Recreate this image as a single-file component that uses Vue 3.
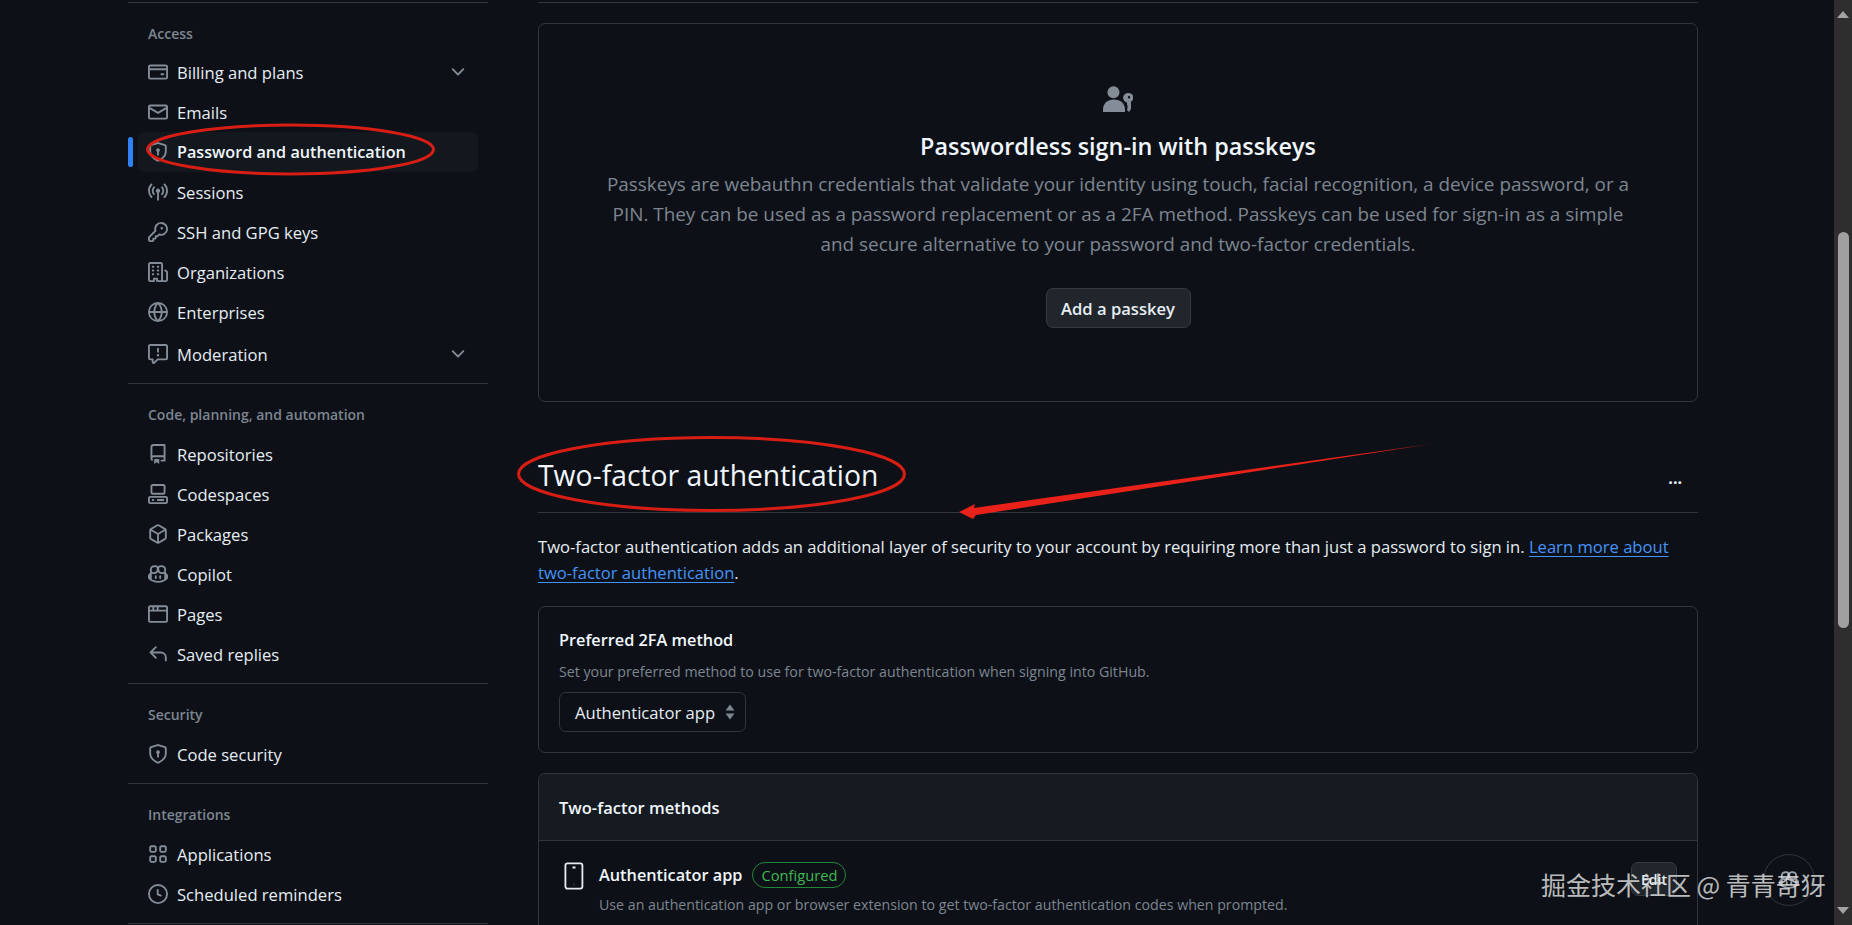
<script setup>
const P = {
  card: 'M10.75 9a.75.75 0 0 0 0 1.5h1.5a.75.75 0 0 0 0-1.5h-1.5ZM0 3.75C0 2.784.784 2 1.75 2h12.5c.966 0 1.75.784 1.75 1.75v8.5A1.75 1.75 0 0 1 14.25 14H1.75A1.75 1.75 0 0 1 0 12.25ZM14.5 6.5h-13v5.75c0 .138.112.25.25.25h12.5a.25.25 0 0 0 .25-.25Zm0-2.75a.25.25 0 0 0-.25-.25H1.75a.25.25 0 0 0-.25.25V5h13Z',
  mail: 'M1.75 2h12.5c.966 0 1.75.784 1.75 1.75v8.5A1.75 1.75 0 0 1 14.25 14H1.75A1.75 1.75 0 0 1 0 12.25v-8.5C0 2.784.784 2 1.75 2ZM1.5 12.251c0 .138.112.25.25.25h12.5a.25.25 0 0 0 .25-.25V5.809L8.38 9.397a.75.75 0 0 1-.76 0L1.5 5.809v6.442Zm13-8.181v-.32a.25.25 0 0 0-.25-.25H1.75a.25.25 0 0 0-.25.25v.32L8 7.88Z',
  shield: 'm8.533.133 5.25 1.68A1.75 1.75 0 0 1 15 3.48V7c0 1.566-.32 3.182-1.303 4.682-.983 1.498-2.585 2.813-5.032 3.855a1.697 1.697 0 0 1-1.33 0c-2.447-1.042-4.049-2.357-5.032-3.855C1.32 10.182 1 8.566 1 7V3.48a1.75 1.75 0 0 1 1.217-1.667l5.25-1.68a1.748 1.748 0 0 1 1.066 0Zm-.61 1.429.001.001-5.25 1.68a.251.251 0 0 0-.174.237V7c0 1.36.275 2.666 1.057 3.859.784 1.194 2.121 2.342 4.366 3.298a.196.196 0 0 0 .154 0c2.245-.957 3.582-2.103 4.366-3.297C13.225 9.666 13.5 8.358 13.5 7V3.48a.25.25 0 0 0-.174-.238l-5.25-1.68a.25.25 0 0 0-.153 0ZM9.5 6.5c0 .536-.286 1.032-.75 1.3v2.45a.75.75 0 0 1-1.5 0V7.8A1.5 1.5 0 1 1 9.5 6.5Z',
  broadcast: 'M8.75 8.582v5.668a.75.75 0 0 1-1.5 0V8.582a1.75 1.75 0 1 1 1.5 0Zm3.983-7.125a.75.75 0 0 1 1.06.026A7.976 7.976 0 0 1 16 7c0 2.139-.84 4.083-2.207 5.517a.75.75 0 1 1-1.086-1.034A6.474 6.474 0 0 0 14.5 7a6.474 6.474 0 0 0-1.793-4.483.75.75 0 0 1 .026-1.06Zm-9.466 0c.3.286.312.76.026 1.06A6.474 6.474 0 0 0 1.5 7a6.47 6.47 0 0 0 1.793 4.483.75.75 0 0 1-1.086 1.034A7.973 7.973 0 0 1 0 7c0-2.139.84-4.083 2.207-5.517a.75.75 0 0 1 1.06-.026Zm8.556 2.321A4.988 4.988 0 0 1 13 7a4.988 4.988 0 0 1-1.177 3.222.75.75 0 1 1-1.146-.967A3.487 3.487 0 0 0 11.5 7c0-.86-.309-1.645-.823-2.255a.75.75 0 0 1 1.146-.967Zm-6.492.958A3.48 3.48 0 0 0 4.5 7a3.48 3.48 0 0 0 .823 2.255.75.75 0 0 1-1.146.967A4.981 4.981 0 0 1 3 7a4.98 4.98 0 0 1 1.188-3.236.75.75 0 1 1 1.143.97Z',
  key: 'M10.5 0a5.499 5.499 0 1 1-1.288 10.848l-.932.932a.749.749 0 0 1-.53.22H7v.75a.749.749 0 0 1-.22.53l-.5.5a.749.749 0 0 1-.53.22H5v.75a.749.749 0 0 1-.22.53l-.5.5a.749.749 0 0 1-.53.22h-2A1.75 1.75 0 0 1 0 14.25v-2c0-.199.079-.389.22-.53l4.932-4.932A5.5 5.5 0 0 1 10.5 0Zm-4 5.5c-.001.431.069.86.205 1.269a.75.75 0 0 1-.181.768L1.5 12.56v1.69c0 .138.112.25.25.25h1.69l.06-.06v-1.19a.75.75 0 0 1 .75-.75h1.19l.06-.06v-1.19a.75.75 0 0 1 .75-.75h1.19l1.023-1.025a.75.75 0 0 1 .768-.18A4 4 0 1 0 6.5 5.5ZM11 6a1 1 0 1 1 0-2 1 1 0 0 1 0 2Z',
  org: 'M1.75 16A1.75 1.75 0 0 1 0 14.25V1.75C0 .784.784 0 1.75 0h8.5C11.216 0 12 .784 12 1.75v12.5c0 .085-.006.168-.018.25h2.268a.25.25 0 0 0 .25-.25V8.285a.25.25 0 0 0-.111-.208l-1.055-.703a.749.749 0 1 1 .832-1.248l1.055.703c.487.325.779.871.779 1.456v5.965A1.75 1.75 0 0 1 14.25 16h-3.5a.766.766 0 0 1-.197-.026c-.099.017-.2.026-.303.026h-3a.75.75 0 0 1-.75-.75V14h-1v1.25a.75.75 0 0 1-.75.75Zm-.25-1.75c0 .138.112.25.25.25H4v-1.25a.75.75 0 0 1 .75-.75h2.5a.75.75 0 0 1 .75.75v1.25h2.25a.25.25 0 0 0 .25-.25V1.75a.25.25 0 0 0-.25-.25h-8.5a.25.25 0 0 0-.25.25ZM3.75 6h.5a.75.75 0 0 1 0 1.5h-.5a.75.75 0 0 1 0-1.5ZM3 3.75A.75.75 0 0 1 3.75 3h.5a.75.75 0 0 1 0 1.5h-.5A.75.75 0 0 1 3 3.75Zm4 3A.75.75 0 0 1 7.75 6h.5a.75.75 0 0 1 0 1.5h-.5A.75.75 0 0 1 7 6.75ZM7.75 3h.5a.75.75 0 0 1 0 1.5h-.5a.75.75 0 0 1 0-1.5ZM3 9.75A.75.75 0 0 1 3.75 9h.5a.75.75 0 0 1 0 1.5h-.5A.75.75 0 0 1 3 9.75ZM7.75 9h.5a.75.75 0 0 1 0 1.5h-.5a.75.75 0 0 1 0-1.5Z',
  globe: 'M8 0a8 8 0 1 1 0 16A8 8 0 0 1 8 0ZM5.78 8.75a9.64 9.64 0 0 0 1.363 4.177c.255.426.542.832.857 1.215.245-.296.551-.705.857-1.215A9.64 9.64 0 0 0 10.22 8.75Zm4.44-1.5a9.64 9.64 0 0 0-1.363-4.177c-.307-.51-.612-.919-.857-1.215a9.927 9.927 0 0 0-.857 1.215A9.64 9.64 0 0 0 5.78 7.25Zm-5.944 1.5H1.543a6.507 6.507 0 0 0 4.666 5.5c-.123-.181-.24-.365-.352-.552-.715-1.192-1.437-2.874-1.581-4.948Zm-2.733-1.5h2.733c.144-2.074.866-3.756 1.58-4.948.12-.197.237-.381.353-.552a6.507 6.507 0 0 0-4.666 5.5Zm10.181 1.5c-.144 2.074-.866 3.756-1.58 4.948-.12.197-.237.381-.353.552a6.507 6.507 0 0 0 4.666-5.5Zm2.733-1.5a6.507 6.507 0 0 0-4.666-5.5c.123.181.24.365.353.552.714 1.192 1.436 2.874 1.58 4.948Z',
  report: 'M0 1.75C0 .784.784 0 1.75 0h12.5C15.216 0 16 .784 16 1.75v9.5A1.75 1.75 0 0 1 14.25 13H8.06l-2.573 2.573A1.458 1.458 0 0 1 3 14.543V13H1.75A1.75 1.75 0 0 1 0 11.25Zm1.75-.25a.25.25 0 0 0-.25.25v9.5c0 .138.112.25.25.25h2a.75.75 0 0 1 .75.75v2.19l2.72-2.72a.749.749 0 0 1 .53-.22h6.5a.25.25 0 0 0 .25-.25v-9.5a.25.25 0 0 0-.25-.25Zm7 2.25v2.5a.75.75 0 0 1-1.5 0v-2.5a.75.75 0 0 1 1.5 0ZM9 9a1 1 0 1 1-2 0 1 1 0 0 1 2 0Z',
  repo: 'M2 2.5A2.5 2.5 0 0 1 4.5 0h8.75a.75.75 0 0 1 .75.75v12.5a.75.75 0 0 1-.75.75h-2.5a.75.75 0 0 1 0-1.5h1.75v-2h-8a1 1 0 0 0-.714 1.7.75.75 0 1 1-1.072 1.05A2.495 2.495 0 0 1 2 11.5Zm10.5-1h-8a1 1 0 0 0-1 1v6.708A2.486 2.486 0 0 1 4.5 9h8ZM5 12.25a.25.25 0 0 1 .25-.25h3.5a.25.25 0 0 1 .25.25v3.25a.25.25 0 0 1-.4.2l-1.45-1.087a.249.249 0 0 0-.3 0L5.4 15.7a.25.25 0 0 1-.4-.2Z',
  codespaces: 'M0 11.25c0-.966.784-1.75 1.75-1.75h12.5c.966 0 1.75.784 1.75 1.75v3A1.75 1.75 0 0 1 14.25 16H1.75A1.75 1.75 0 0 1 0 14.25Zm2-9.5C2 .784 2.784 0 3.75 0h8.5C13.216 0 14 .784 14 1.75v5a1.75 1.75 0 0 1-1.75 1.75h-8.5A1.75 1.75 0 0 1 2 6.75Zm1.75-.25a.25.25 0 0 0-.25.25v5c0 .138.112.25.25.25h8.5a.25.25 0 0 0 .25-.25v-5a.25.25 0 0 0-.25-.25Zm-2 9.5a.25.25 0 0 0-.25.25v3c0 .138.112.25.25.25h12.5a.25.25 0 0 0 .25-.25v-3a.25.25 0 0 0-.25-.25ZM7 12.75a.75.75 0 0 1 .75-.75h4.5a.75.75 0 0 1 0 1.5h-4.5a.75.75 0 0 1-.75-.75Zm-4 0a.75.75 0 0 1 .75-.75h.5a.75.75 0 0 1 0 1.5h-.5a.75.75 0 0 1-.75-.75Z',
  pkg: 'm8.878.392 5.25 3.045c.54.314.872.89.872 1.514v6.098a1.75 1.75 0 0 1-.872 1.514l-5.25 3.045a1.75 1.75 0 0 1-1.756 0l-5.25-3.045A1.75 1.75 0 0 1 1 11.049V4.951c0-.624.332-1.201.872-1.514L7.122.392a1.75 1.75 0 0 1 1.756 0ZM7.875 1.69l-4.63 2.685L8 7.133l4.755-2.758-4.63-2.685a.248.248 0 0 0-.25 0ZM2.5 5.677v5.372c0 .09.047.171.125.216l4.625 2.683V8.432Zm6.25 8.271 4.625-2.683a.25.25 0 0 0 .125-.216V5.677L8.75 8.432Z',
  copilot: 'M7.998 15.035c-4.562 0-7.873-2.914-7.998-3.749V9.338c.085-.628.677-1.686 1.588-2.065.013-.07.024-.143.036-.218.029-.183.06-.384.126-.612-.201-.508-.254-1.084-.254-1.656 0-.87.128-1.769.693-2.484.579-.733 1.494-1.124 2.724-1.261 1.206-.134 2.262.034 2.944.765.05.053.096.108.139.165.044-.057.094-.112.143-.165.682-.731 1.738-.899 2.944-.765 1.23.137 2.145.528 2.724 1.261.566.715.693 1.614.693 2.484 0 .572-.053 1.148-.254 1.656.066.228.098.429.126.612.012.076.024.148.037.218.924.385 1.522 1.471 1.591 2.095v1.872c0 .766-3.351 3.795-8.002 3.795Zm0-1.485c2.28 0 4.584-1.11 5.002-1.433V7.862l-.023-.116c-.49.21-1.075.291-1.727.291-1.146 0-2.059-.327-2.71-.991A3.222 3.222 0 0 1 8 6.303a3.24 3.24 0 0 1-.544.743c-.65.664-1.563.991-2.71.991-.652 0-1.236-.081-1.727-.291l-.023.116v4.255c.419.323 2.722 1.433 5.002 1.433ZM6.762 2.83c-.193-.206-.637-.413-1.682-.297-1.019.113-1.479.404-1.713.7-.247.312-.369.789-.369 1.554 0 .793.129 1.171.308 1.371.162.181.519.379 1.442.379.853 0 1.339-.235 1.638-.54.315-.322.527-.827.617-1.553.117-.935-.037-1.395-.241-1.614Zm4.155-.297c-1.044-.116-1.488.091-1.681.297-.204.219-.359.679-.242 1.614.091.726.303 1.231.618 1.553.299.305.784.54 1.638.54.922 0 1.28-.198 1.442-.379.179-.2.308-.578.308-1.371 0-.765-.123-1.242-.37-1.554-.233-.296-.693-.587-1.713-.7ZM6.25 9.037a.75.75 0 0 1 .75.75v1.501a.75.75 0 0 1-1.5 0V9.787a.75.75 0 0 1 .75-.75Zm4.25.75v1.501a.75.75 0 0 1-1.5 0V9.787a.75.75 0 0 1 1.5 0Z',
  browser: 'M0 2.75C0 1.784.784 1 1.75 1h12.5c.966 0 1.75.784 1.75 1.75v10.5A1.75 1.75 0 0 1 14.25 15H1.75A1.75 1.75 0 0 1 0 13.25ZM14.5 6h-13v7.25c0 .138.112.25.25.25h12.5a.25.25 0 0 0 .25-.25Zm-6-3.5v2h6v-1.75a.25.25 0 0 0-.25-.25ZM5 2.5v2h2v-2Zm-3.25 0a.25.25 0 0 0-.25.25V4.5h2v-2Z',
  reply: 'M6.78 1.97a.75.75 0 0 1 0 1.06L3.81 6h6.44A4.75 4.75 0 0 1 15 10.75v2.5a.75.75 0 0 1-1.5 0v-2.5a3.25 3.25 0 0 0-3.25-3.25H3.81l2.97 2.97a.749.749 0 0 1-.326 1.275.749.749 0 0 1-.734-.215L1.47 7.28a.75.75 0 0 1 0-1.06l4.25-4.25a.75.75 0 0 1 1.06 0Z',
  clock: 'M8 0a8 8 0 1 1 0 16A8 8 0 0 1 8 0ZM1.5 8a6.5 6.5 0 1 0 13 0 6.5 6.5 0 0 0-13 0Zm7-3.25v2.992l2.028.812a.75.75 0 0 1-.557 1.392l-2.5-1A.751.751 0 0 1 7 8.25v-3.5a.75.75 0 0 1 1.5 0Z',
}
const tile = (x, y) => `M${x} ${y + 1.75}c0-.966.784-1.75 1.75-1.75h2.5c.966 0 1.75.784 1.75 1.75v2.5c0 .966-.784 1.75-1.75 1.75h-2.5c-.966 0-1.75-.784-1.75-1.75Zm1.75-.25a.25.25 0 0 0-.25.25v2.5c0 .138.112.25.25.25h2.5a.25.25 0 0 0 .25-.25v-2.5a.25.25 0 0 0-.25-.25Z`
P.apps = tile(1, 1) + tile(9, 1) + tile(1, 9) + tile(9, 9)
const chevron = 'M12.78 5.22a.749.749 0 0 1 0 1.06l-4.25 4.25a.749.749 0 0 1-1.06 0L3.22 6.28a.749.749 0 1 1 1.06-1.06L8 8.939l3.72-3.719a.749.749 0 0 1 1.06 0Z'

const groups = [
  { title: 'Access', items: [
    { label: 'Billing and plans', icon: 'card', more: true },
    { label: 'Emails', icon: 'mail' },
    { label: 'Password and authentication', icon: 'shield', active: true },
    { label: 'Sessions', icon: 'broadcast' },
    { label: 'SSH and GPG keys', icon: 'key' },
    { label: 'Organizations', icon: 'org' },
    { label: 'Enterprises', icon: 'globe' },
    { label: 'Moderation', icon: 'report', more: true, gap: true },
  ] },
  { title: 'Code, planning, and automation', items: [
    { label: 'Repositories', icon: 'repo' },
    { label: 'Codespaces', icon: 'codespaces' },
    { label: 'Packages', icon: 'pkg' },
    { label: 'Copilot', icon: 'copilot' },
    { label: 'Pages', icon: 'browser' },
    { label: 'Saved replies', icon: 'reply' },
  ] },
  { title: 'Security', items: [{ label: 'Code security', icon: 'shield' }] },
  { title: 'Integrations', items: [
    { label: 'Applications', icon: 'apps' },
    { label: 'Scheduled reminders', icon: 'clock' },
  ] },
]
</script>

<template>
  <div class="page">
    <div class="content">
      <aside class="side">
        <section v-for="g in groups" :key="g.title" class="group">
          <h3 class="group-title">{{ g.title }}</h3>
          <a v-for="it in g.items" :key="it.label" class="row" :class="{ active: it.active, gap: it.gap }">
            <svg class="ico" viewBox="0 0 16 16" width="20" height="20" fill="currentColor"><path fill-rule="evenodd" :d="P[it.icon]" /></svg>
            <span class="row-label">{{ it.label }}</span>
            <svg v-if="it.more" class="chev" viewBox="0 0 16 16" width="20" height="20" fill="currentColor"><path :d="chevron" /></svg>
          </a>
        </section>
      </aside>

      <main class="main">
        <section class="passkey">
          <svg class="pk-ico" viewBox="0 0 30 26" width="30" height="26" fill="#848d97">
            <circle cx="10.5" cy="6.2" r="6" />
            <path d="M0 26v-2.5C0 17.5 4.5 13.5 11 13.5s11 4 11 10V26Z" />
            <path fill-rule="evenodd" d="M26 7a4.5 4.5 0 0 1 2 8.5V23l-2 3-2-2v-1l1-1-1-1 1-1-1-1v-2.5A4.5 4.5 0 0 1 26 7Zm0 3a1.2 1.2 0 1 0 0 2.4 1.2 1.2 0 0 0 0-2.4Z" />
          </svg>
          <h2 class="pk-title">Passwordless sign-in with passkeys</h2>
          <p class="pk-text">Passkeys are webauthn credentials that validate your identity using touch, facial recognition, a device password, or a<br />PIN. They can be used as a password replacement or as a 2FA method. Passkeys can be used for sign-in as a simple<br />and secure alternative to your password and two-factor credentials.</p>
          <button class="btn pk-btn">Add a passkey</button>
        </section>

        <header class="tf-head">
          <h1 class="tf-title">Two-factor authentication</h1>
          <span class="dots">...</span>
        </header>
        <p class="tf-text">Two-factor authentication adds an additional layer of security to your account by requiring more than just a password to sign in. <a class="link">Learn more about<br />two-factor authentication</a>.</p>

        <section class="pref">
          <div class="pref-title">Preferred 2FA method</div>
          <div class="note">Set your preferred method to use for two-factor authentication when signing into GitHub.</div>
          <div class="select">
            <span>Authenticator app</span>
            <svg viewBox="0 0 10 16" width="10" height="16" fill="#7d8590"><path d="M5 0.5 9.5 6.5H.5ZM5 15.5 .5 9.5h9Z" /></svg>
          </div>
        </section>

        <section class="methods">
          <div class="methods-head">Two-factor methods</div>
          <div class="method">
            <svg class="phone" viewBox="0 0 20 28" width="20" height="28" fill="none" stroke="#e6edf3" stroke-width="1.8">
              <rect x="1.4" y="1.4" width="17" height="25.2" rx="2" />
              <path d="M8.5 5.5h3M9.9 22.5h.2" />
            </svg>
            <div class="method-body">
              <div class="method-line">
                <span class="method-name">Authenticator app</span>
                <span class="badge">Configured</span>
              </div>
              <div class="note">Use an authentication app or browser extension to get two-factor authentication codes when prompted.</div>
            </div>
            <button class="btn edit">Edit</button>
          </div>
        </section>
      </main>
    </div>

    <div class="scrollbar">
      <span class="arrow up"></span>
      <div class="track"><div class="thumb"></div></div>
      <span class="arrow down"></span>
    </div>

    <svg class="marks" width="1852" height="925" viewBox="0 0 1852 925" fill="none">
      <ellipse cx="290.5" cy="149.5" rx="143" ry="24.5" stroke="#d81e14" stroke-width="3" />
      <ellipse cx="711.5" cy="474" rx="193" ry="36.5" stroke="#d81e14" stroke-width="3" />
      <path d="M959 512 975 504 974 508 1431 444 976 515 973 519Z" fill="#e8221a" />
    </svg>

    <div class="top-circle">
      <svg viewBox="0 0 16 16" width="20" height="20" fill="#9aa0a8"><path fill-rule="evenodd" :d="P.copilot" /></svg>
    </div>
    <div class="watermark">掘金技术社区 @ 青青奇犽</div>
  </div>
</template>

<style>
html, body { margin: 0; background: #0d1117; overflow: hidden; }
</style>

<style scoped>
.page {
  position: relative;
  display: flex;
  width: 1852px;
  height: 925px;
  overflow: hidden;
  background: #0d1117;
  color: #e6edf3;
  font-family: "Open Sans", "Noto Sans CJK SC", sans-serif;
  font-size: 16.6px;
}
.content {
  flex: 1;
  display: flex;
  align-items: flex-start;
  padding-left: 128px;
  gap: 50px;
  min-width: 0;
}
.side { width: 360px; flex: none; padding-top: 2px; }
.group { border-top: 1px solid #30363d; padding: 19px 0 9px; }
.group:first-child .group-title { margin-bottom: 6px; }
.group:last-child { border-bottom: 1px solid #30363d; }
.group-title {
  margin: 0 0 7px 20px;
  height: 24px;
  line-height: 24px;
  font-size: 14px;
  font-weight: 600;
  color: #7d8590;
}
.row {
  position: relative;
  display: flex;
  align-items: center;
  height: 40px;
  margin-left: 10px;
  width: 340px;
  padding-left: 10px;
  box-sizing: border-box;
  border-radius: 7px;
  color: #e6edf3;
}
.row.gap { margin-top: 2px; }
.row.active { background: #13181f; font-weight: 600; font-size: 16.2px; color: #f0f6fc; }
.row.active::before {
  content: "";
  position: absolute;
  left: -10px;
  top: 5px;
  width: 5px;
  height: 30px;
  border-radius: 3px;
  background: #2f81f7;
}
.ico { flex: none; color: #848d97; margin-right: 9px; }
.row-label { flex: 1; white-space: nowrap; }
.chev { flex: none; color: #848d97; margin-right: 10px; }

.main { width: 1160px; flex: none; padding-top: 2px; position: relative; }
.main::before { content: ""; display: block; border-top: 1px solid #30363d; margin-bottom: 20px; }
.passkey {
  display: flex;
  flex-direction: column;
  align-items: center;
  height: 379px;
  box-sizing: border-box;
  padding-top: 62px;
  border: 1px solid #30363d;
  border-radius: 7px;
  text-align: center;
}
.pk-ico { display: block; }
.pk-title { margin: 18px 0 0; font-size: 23.4px; line-height: 32px; font-weight: 600; color: #f0f6fc; }
.pk-text { margin: 7px 0 0; font-size: 18.9px; line-height: 30px; color: #7d8590; white-space: nowrap; }
.btn {
  font: inherit;
  font-weight: 600;
  color: #e6edf3;
  background: #21262d;
  border: 1px solid #363b42;
  border-radius: 7px;
}
.pk-btn { margin-top: 29px; width: 145px; height: 40px; padding: 0; font-size: 16.6px; }
.tf-head {
  display: flex;
  align-items: center;
  justify-content: space-between;
  height: 111px;
  box-sizing: border-box;
  padding-top: 36px;
  border-bottom: 1px solid #30363d;
}
.tf-title { margin: 0; font-size: 28.3px; line-height: 40px; font-weight: 400; color: #f0f6fc; }
.dots { font-size: 16px; line-height: 20px; font-weight: 700; margin-right: 16px; margin-top: 6px; }
.tf-text { margin: 21px 0 0; font-size: 16.6px; line-height: 26px; white-space: nowrap; }
.link { color: #4493f8; text-decoration: underline; text-underline-offset: 3px; }
.pref {
  margin-top: 20px;
  height: 147px;
  box-sizing: border-box;
  padding: 19px 20px;
  border: 1px solid #30363d;
  border-radius: 7px;
}
.pref-title { font-size: 16.3px; line-height: 28px; font-weight: 600; color: #f0f6fc; }
.note { font-size: 14.2px; line-height: 22px; color: #7d8590; white-space: nowrap; }
.pref .note { margin-top: 7px; }
.select {
  display: flex;
  align-items: center;
  justify-content: space-between;
  width: 187px;
  height: 40px;
  margin-top: 9px;
  padding: 0 10px 0 15px;
  box-sizing: border-box;
  border: 1px solid #30363d;
  border-radius: 7px;
}
.methods {
  margin-top: 20px;
  border: 1px solid #30363d;
  border-radius: 7px 7px 0 0;
  border-bottom: 0;
}
.methods-head {
  height: 66px;
  line-height: 68px;
  padding-left: 20px;
  background: #161b22;
  border-bottom: 1px solid #30363d;
  border-radius: 7px 7px 0 0;
  font-size: 16.5px;
  font-weight: 600;
  color: #f0f6fc;
}
.method { display: flex; align-items: flex-start; padding: 21px 20px 40px 25px; }
.phone { flex: none; margin-right: 15px; }
.method-body { flex: 1; min-width: 0; }
.method-line { display: flex; align-items: center; gap: 10px; height: 26px; }
.method-name { font-size: 16.3px; font-weight: 600; color: #f0f6fc; }
.badge {
  display: flex;
  align-items: center;
  height: 24px;
  padding: 0 8px;
  border: 1px solid #238636;
  border-radius: 13px;
  font-size: 14.7px;
  color: #3fb950;
}
.method-body .note { margin-top: 6px; }
.edit { flex: none; width: 46px; height: 34px; padding: 0; font-size: 14px; }

.scrollbar {
  flex: none;
  display: flex;
  flex-direction: column;
  align-items: center;
  width: 18px;
  height: 925px;
  background: #2e2e2e;
}
.arrow { width: 0; height: 0; border-left: 6px solid transparent; border-right: 6px solid transparent; flex: none; }
.up { margin-top: 11px; border-bottom: 7px solid #a3a3a3; }
.down { margin-bottom: 11px; border-top: 7px solid #a3a3a3; }
.track { flex: 1; width: 100%; padding-top: 214px; box-sizing: border-box; }
.thumb { width: 11px; height: 396px; margin-left: 4px; border-radius: 6px; background: #a0a0a0; }

.marks { position: absolute; left: 0; top: 0; pointer-events: none; }
.top-circle {
  position: absolute;
  left: 1763px;
  top: 854px;
  display: flex;
  align-items: center;
  justify-content: center;
  width: 52px;
  height: 52px;
  box-sizing: border-box;
  border: 1px solid #30363d;
  border-radius: 50%;
}
.watermark {
  position: absolute;
  left: 1541px;
  top: 866px;
  font-family: "Noto Sans CJK SC", sans-serif;
  font-size: 25px;
  line-height: 36px;
  color: rgba(225, 225, 225, 0.82);
  white-space: nowrap;
}
</style>
